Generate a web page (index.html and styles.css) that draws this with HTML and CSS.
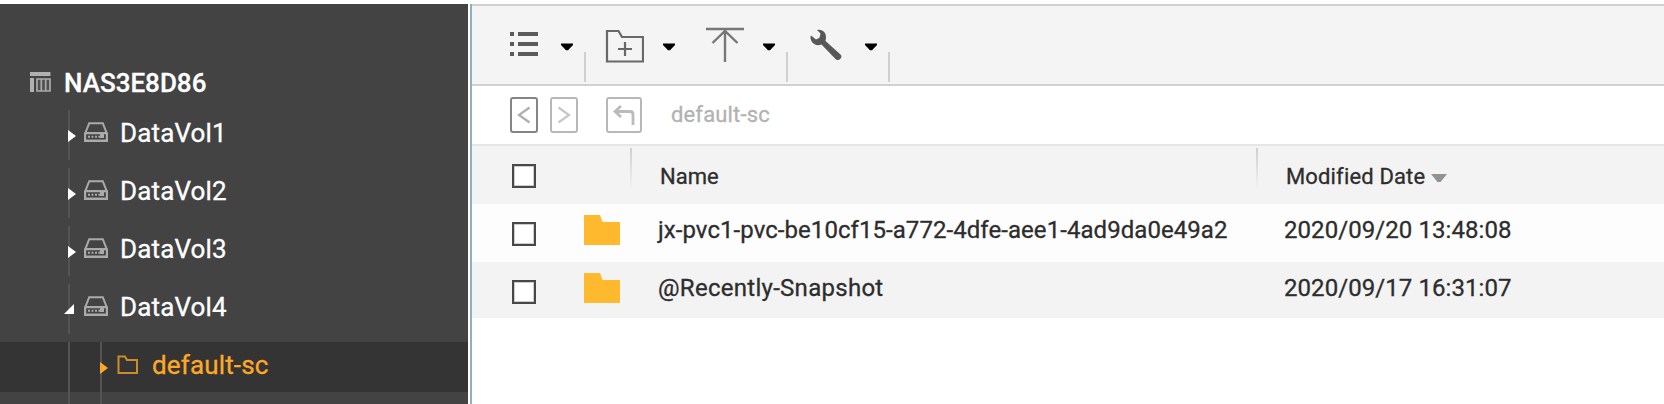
FILE: index.html
```html
<!DOCTYPE html>
<html lang="en">
<head>
<meta charset="utf-8">
<title>File Station</title>
<link rel="stylesheet" href="styles.css">
</head>
<body>
<svg class="defs" width="0" height="0">
  <symbol id="drive" viewBox="0 0 24 20">
    <path d="M5.2 1.2H18.8L22.6 11H1.4Z" fill="none" stroke="#aaa" stroke-width="2"/>
    <path fill-rule="evenodd" d="M0 10.5H24V20H0ZM2.2 12.3V17.6H21.8V12.3H20V16H16V12.3Z" fill="#aaa"/>
    <path d="M4 14.7H6M7.5 14.7H9.5M11 14.7H13M14.3 14.7H16.5" stroke="#aaa" stroke-width="2"/>
  </symbol>
  <symbol id="closed" viewBox="0 0 20 50">
    <path d="M9 0V50" stroke="#545454" stroke-width="2"/>
    <path d="M8 20V32L16 26Z" fill="#fff"/>
  </symbol>
  <symbol id="caret" viewBox="0 0 12 8">
    <path d="M0 .5H12V2L7 7.2H5L0 2Z" fill="#000"/>
  </symbol>
  <symbol id="folder" viewBox="0 0 36 30">
    <path d="M0 0H16L18.5 7H36V30H0Z" fill="#ffb92e"/>
  </symbol>
</svg>
<div class="app">
  <nav class="sidebar">
    <div class="root">
      <svg width="22" height="22" viewBox="0 0 22 22"><path d="M0 1H20.500V5H0ZM0 7H4V21H0Z" fill="#b0b0b0"/><path d="M7 8H20V20H7ZM11.3 8V20M15.7 8V20" fill="#4f4f4f" stroke="#aaa" stroke-width="1.7"/></svg>
      <span>NAS3E8D86</span>
    </div>
    <div class="node"><svg class="twig"><use href="#closed"/></svg><svg class="drive"><use href="#drive"/></svg><span>DataVol1</span></div>
    <div class="node"><svg class="twig"><use href="#closed"/></svg><svg class="drive"><use href="#drive"/></svg><span>DataVol2</span></div>
    <div class="node"><svg class="twig"><use href="#closed"/></svg><svg class="drive"><use href="#drive"/></svg><span>DataVol3</span></div>
    <div class="node"><svg class="twig" viewBox="0 0 20 50"><path d="M9 0V50" stroke="#545454" stroke-width="2"/><path d="M14 20V30H4Z" fill="#fff"/></svg><svg class="drive"><use href="#drive"/></svg><span>DataVol4</span></div>
    <div class="node selected">
      <svg class="twig deep" viewBox="0 0 52 50"><path d="M9 0V50M41 0V50" stroke="#545454" stroke-width="2"/><path d="M40 20V32L48 26Z" fill="#ffa827"/></svg>
      <svg class="outline" viewBox="0 0 22 20"><path d="M1.5 1.5H8L10 5H20V18H1.5Z" fill="none" stroke="#cd8c2c" stroke-width="2"/></svg>
      <span>default-sc</span>
    </div>
    <div class="tail"></div>
  </nav>
  <main class="main">
    <div class="toolbar">
      <div class="tool">
        <svg class="icon" viewBox="0 0 40 40"><path d="M2 10H6M2 20H6M2 30H6M10 10H30M10 20H30M10 30H30" stroke="#5a5a5a" stroke-width="4"/></svg>
        <svg class="caret"><use href="#caret"/></svg>
      </div>
      <i class="divider"></i>
      <div class="tool">
        <svg class="icon" viewBox="0 0 40 40"><path d="M3 37V7H14.5L18 13H39V37.500H3Z" fill="none" stroke="#686868" stroke-width="2.200"/><path d="M14 25H28M21 18V32" stroke="#686868" stroke-width="2.200"/></svg>
        <svg class="caret"><use href="#caret"/></svg>
      </div>
      <div class="tool upload">
        <svg class="icon" viewBox="0 0 40 40"><path d="M2 5H40" stroke="#777" stroke-width="2.400"/><path d="M21 6V38M8.500 19L21 7L33.500 19" fill="none" stroke="#777" stroke-width="2.400"/></svg>
        <svg class="caret"><use href="#caret"/></svg>
      </div>
      <i class="divider"></i>
      <div class="tool">
        <svg class="icon" viewBox="0 0 40 40"><path d="M11 6C16 5 20 8 20 13C20 14.500 19.700 16 19.500 17L34.500 30.500C36.500 32.500 35 35.500 32 36C30.800 36.200 29.800 35.500 29 34.500L15.500 20.500C12 22 8 21 6 18C4.500 15.800 4 13 5 11.500L10 15.500L13.500 13.800L14.500 9.500Z" fill="#585858"/></svg>
        <svg class="caret"><use href="#caret"/></svg>
      </div>
      <i class="divider"></i>
    </div>
    <div class="pathbar">
      <button class="nav back"><svg width="14" height="18" viewBox="0 0 14 18"><path d="M12.500 1.500L2 9L12.500 16.500" fill="none" stroke="#b0b0b0" stroke-width="2.400"/></svg></button>
      <button class="nav"><svg width="14" height="18" viewBox="0 0 14 18"><path d="M1.500 1.500L12 9L1.500 16.500" fill="none" stroke="#c8c8c8" stroke-width="2.200"/></svg></button>
      <button class="nav up"><svg width="22" height="22" viewBox="0 0 22 22"><path d="M8 2L2 7.500L8 13M2 7.500H17Q20 7.500 20 10.500V21" fill="none" stroke="#bbb" stroke-width="2.800"/></svg></button>
      <span class="path">default-sc</span>
    </div>
    <div class="row head">
      <i class="check"></i><span></span>
      <div class="cell"><span>Name</span></div>
      <div class="cell sorted"><span>Modified Date</span><svg class="sort" viewBox="0 0 16 9"><path d="M0 0H16L9.500 8H6.500Z" fill="#929292"/></svg></div>
    </div>
    <div class="row">
      <i class="check"></i><svg class="folder"><use href="#folder"/></svg>
      <span class="name volume">jx-pvc1-pvc-be10cf15-a772-4dfe-aee1-4ad9da0e49a2</span><span class="date">2020/09/20 13:48:08</span>
    </div>
    <div class="row alt">
      <i class="check"></i><svg class="folder"><use href="#folder"/></svg>
      <span class="name">@Recently-Snapshot</span><span class="date">2020/09/17 16:31:07</span>
    </div>
  </main>
</div>
</body>
</html>
```
FILE: styles.css
```css
* { box-sizing: border-box; }
body { margin: 0; background: #fff; font-family: Roboto, "Liberation Sans", sans-serif; -webkit-text-stroke: 0.3px; overflow: hidden; }
svg { display: block; flex: none; }
.defs { position: absolute; }
.app { display: flex; height: 404px; padding-top: 4px; }

.sidebar { width: 468px; flex: none; background: #434343; color: #fff; font-size: 26px; line-height: 30px; overflow: hidden; }
.root { display: flex; align-items: center; gap: 12px; height: 98px; margin-bottom: 8px; padding: 58px 0 0 30px; font-weight: 500; }
.root span { margin-top: 2px; }
.node { display: flex; align-items: flex-start; height: 50px; margin-bottom: 8px; padding-left: 60px; }
.node span { margin: 8px 0 0 12px; letter-spacing: 0.15px; }
.twig { width: 20px; height: 50px; }
.drive { width: 24px; height: 20px; margin: 12px 0 0 4px; }
.selected { margin-bottom: 0; background: #343434; color: #ffa827; }
.twig.deep { width: 52px; }
.outline { width: 22px; height: 20px; margin: 13px 0 0 5px; }
.selected span { margin-left: 13px; letter-spacing: 0.15px; }
.tail { width: 34px; height: 12px; margin-left: 68px; border: solid #545454; border-width: 0 2px; }

.main { flex: 1; margin-left: 2px; border-left: 2px solid #8fb0be; }
.toolbar { display: flex; height: 82px; padding: 18px 0 0 36px; border: solid #d0d0d0; border-width: 2px 0; background: #f4f4f4; }
.tool { display: flex; }
.icon { width: 40px; height: 40px; }
.caret { width: 12px; height: 8px; margin: 19px 11px 0 13px; }
.divider { width: 2px; height: 30px; margin: 28px 18px 0 0; background: #d0d0d0; }
.divider + .tool .caret,
.upload .caret { margin-left: 19px; }
.upload { margin-left: 18px; }

.pathbar { display: flex; align-items: center; height: 60px; padding-left: 38px; border-bottom: 2px solid #e6e6e6; background: #fff; }
.nav { display: flex; align-items: center; justify-content: center; width: 28px; height: 36px; margin: 0 12px 0 0; padding: 0; border: 2px solid #b8b8b8; border-radius: 3px; background: #fff; }
.back { border-color: #858585; }
.up { width: 36px; margin-left: 16px; }
.path { margin-left: 17px; color: #b2b2b2; font-size: 22px; line-height: 26px; letter-spacing: 0.15px; }

.row { display: grid; grid-template-columns: 112px 46px 626px 1fr; height: 56px; margin-bottom: 2px; background: #fdfdfd; color: #2d2d2d; font-size: 24px; line-height: 28px; }
.head { height: 58px; margin-bottom: 0; font-size: 22px; line-height: 26px; }
.head, .alt { background: #f3f3f3; }
.check { width: 24px; height: 24px; margin: 18px 0 0 40px; border: 2px solid #484848; background: #fff; box-shadow: inset 0 0 0 1px #ccc; }
.folder { width: 36px; height: 30px; margin-top: 11px; }
.name { margin: 12px 0 0 28px; letter-spacing: 0.28px; }
.volume { letter-spacing: 0.06px; }
.date { margin: 12px 0 0 28px; letter-spacing: 0.07px; }
.cell { display: flex; padding: 18px 0 0 30px; background: linear-gradient(#cfcfcf, #f3f3f3) 0 2px / 2px 42px no-repeat; }
.sorted { letter-spacing: 0.15px; }
.sort { width: 16px; height: 9px; margin: 10px 0 0 6px; }
```
